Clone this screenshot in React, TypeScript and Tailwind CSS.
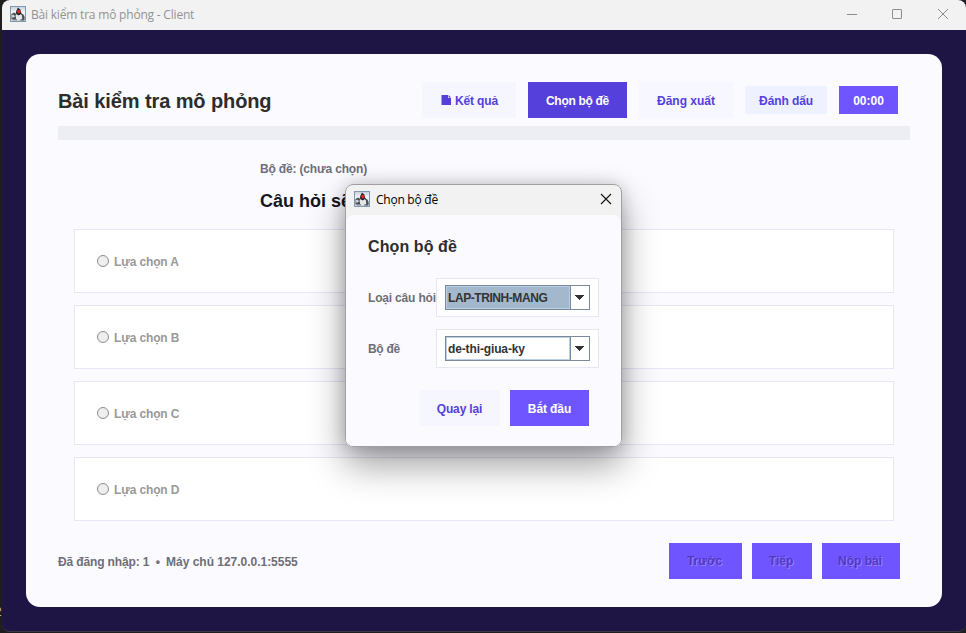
import React from "react";

const bold = "font-['Liberation_Sans',Arial,sans-serif] font-bold";

function DukeIcon() {
  return (
    <svg width="16" height="16" viewBox="0 0 16 16" className="shrink-0">
      <defs>
        <linearGradient id="duke-sky" x1="0" y1="0" x2="0" y2="1">
          <stop offset="0" stopColor="#c3d0db" />
          <stop offset="0.4" stopColor="#f4f7f9" />
          <stop offset="1" stopColor="#c4d0da" />
        </linearGradient>
      </defs>
      <rect x="0.5" y="0.5" width="15" height="15" fill="url(#duke-sky)" stroke="#7f9ab0" />
      <path d="M1.5 8 L4 6.6 L6.4 8 L6 13 L1.5 13.4 Z" fill="#4a4e54" />
      <path d="M1.6 9.6 L3.6 8.6 L5 10.6 L2.6 12 Z" fill="#d5d8da" />
      <path d="M10.6 7 L13.4 8.6 L14.6 11 L14.4 14.2 L11.4 14.2 Z" fill="#4a4e54" />
      <path d="M8 1.4 L10.2 3.4 L11.4 7.2 L10 9.6 L7.6 9.6 L5.8 7 L6.6 4.2 Z" fill="#25272c" />
      <path d="M5.4 9.4 L7 8.4 L8.6 9.8 L10.6 8.2 L12 9.6 L12.2 13 L10 14 L6.4 13.6 Z" fill="#e6e6e6" />
      <path d="M3 13.8 H7 M10 14 H14" stroke="#686c72" />
      <circle cx="8.9" cy="5.6" r="1.8" fill="#e0222b" />
    </svg>
  );
}

function Option({ label }: { label: string }) {
  return (
    <div className="flex h-16 items-center gap-[5px] border border-[#e6e6f5] bg-white pl-[22px]">
      <span className="size-3 rounded-full border border-[#8c8c8c] bg-[#eeeeee]" />
      <span className={`${bold} whitespace-nowrap pt-px text-xs tracking-[-0.15px] text-[#999999]`}>{label}</span>
    </div>
  );
}

function Combo({ value, selected }: { value: string; selected?: boolean }) {
  return (
    <div className="h-[39px] w-[163px] shrink-0 border border-[#e6e6f5] bg-white py-1.5 pl-2">
      <div className="flex h-[25px] w-[145px] border border-[#7a8a99]">
        <div
          className={`flex w-[124px] items-center border border-[#b8cfe5] pl-px text-xs text-[#333333] ${bold} ${
            selected ? "bg-[#a3b8cc] tracking-[-0.43px]" : "bg-white tracking-[-0.13px]"
          }`}
        >
          <span className="whitespace-nowrap">{value}</span>
        </div>
        <div className="flex flex-1 items-center justify-center border-l border-[#7a8a99] pr-0.5">
          <svg width="10" height="5" viewBox="0 0 10 5" shapeRendering="crispEdges">
            <path d="M0 0 H10 L5 5 Z" fill="#333333" />
          </svg>
        </div>
      </div>
    </div>
  );
}

function DisabledButton({ label, width }: { label: string; width: string }) {
  return (
    <button
      className={`${bold} ${width} h-9 whitespace-nowrap bg-[#6f55ff] pr-0.5 text-xs text-[#5339bf] [text-shadow:1px_1px_0_#9380ff]`}
    >
      {label}
    </button>
  );
}

function Dialog() {
  return (
    <section className="absolute left-[345px] top-[184px] flex h-[263px] w-[277px] flex-col overflow-hidden rounded-[8px] border border-[#a0a0a3] bg-[#f2f2f2]">
      <header className="flex h-[30px] shrink-0 items-center pl-2 pr-[9px]">
        <div className="pb-0.5">
          <DukeIcon />
        </div>
        <span className="ml-1.5 whitespace-nowrap font-['Open_Sans','Noto_Sans',sans-serif] text-xs tracking-[-0.25px] text-black">
          Chọn bộ đề
        </span>
        <svg className="mb-0.5 ml-auto" width="12" height="12" viewBox="0 0 12 12">
          <path d="M1 1 L11 11 M11 1 L1 11" stroke="#111111" strokeWidth="1.1" />
        </svg>
      </header>
      <div className="flex-1 rounded-t-[8px] bg-[#fbfaff] pl-[22px] pt-[21px]">
        <h2 className={`${bold} h-[21px] whitespace-nowrap text-base leading-[21px] tracking-[0.1px] text-[#2d2d2d]`}>
          Chọn bộ đề
        </h2>
        <div className={`${bold} mt-[21px] flex items-center text-xs text-[#6e6e78]`}>
          <span className="w-[68px] whitespace-nowrap tracking-[-0.18px]">Loại câu hỏi</span>
          <Combo value="LAP-TRINH-MANG" selected />
        </div>
        <div className={`${bold} mt-3 flex items-center text-xs text-[#6e6e78]`}>
          <span className="w-[68px] whitespace-nowrap tracking-[-0.3px]">Bộ đề</span>
          <Combo value="de-thi-giua-ky" />
        </div>
        <div className={`${bold} mt-[22px] flex gap-2.5 pl-[51px] text-xs`}>
          <button className="h-9 w-[81px] bg-[#f5f6ff] pt-0.5 tracking-[-0.15px] text-[#5540db]">Quay lại</button>
          <button className="h-9 w-[79px] bg-[#6f55ff] pt-0.5 tracking-[-0.1px] text-white">Bắt đầu</button>
        </div>
      </div>
    </section>
  );
}

export default function App() {
  return (
    <div className="relative h-[633px] w-[966px] overflow-hidden bg-[#1e1e20] pl-0.5">
      <main className="flex h-[632px] w-[964px] flex-col overflow-hidden rounded-[8px] border-b border-[#3b3a42] bg-[#1e1545]">
        <header className="flex h-[30px] shrink-0 items-center bg-[#f2f2f2] pl-2 pr-[17px]">
          <div className="pb-0.5">
            <DukeIcon />
          </div>
          <span className="ml-[5px] whitespace-nowrap font-['Open_Sans','Noto_Sans',sans-serif] text-xs tracking-[-0.2px] text-[#929292]">
            Bài kiểm tra mô phỏng - Client
          </span>
          <svg className="mb-0.5 ml-auto" width="102" height="12" viewBox="0 0 102 12" fill="none" stroke="#8c8c8c">
            <path d="M0 6.5 H10" />
            <rect x="45.5" y="1.5" width="9" height="9" rx="0.5" />
            <path d="M91 1 L101 11 M101 1 L91 11" />
          </svg>
        </header>
        <section className="ml-6 mt-6 flex h-[553px] w-[916px] flex-col rounded-[14px] bg-[#fbfaff] px-8 pt-7">
          <div className="flex h-9 items-center">
            <h1 className={`${bold} whitespace-nowrap pt-0.5 text-xl tracking-[-0.1px] text-[#2d2d2d]`}>
              Bài kiểm tra mô phỏng
            </h1>
            <div className={`${bold} ml-auto mr-3 flex items-center gap-3 whitespace-nowrap text-xs text-[#5540db]`}>
              <button className="flex h-9 w-[94px] items-center bg-[#f5f6ff] pl-[19px] tracking-[-0.15px]">
                <svg width="10" height="10" viewBox="0 0 10 10" className="mr-1">
                  <path d="M0.5 0 H7 V3 H10 V10 H0.5 Z M7.6 0 L10 2.4 H7.6 Z" fill="currentColor" />
                </svg>
                <span className="pt-0.5">Kết quả</span>
              </button>
              <button className="h-9 w-[99px] bg-[#5540db] pt-0.5 tracking-[-0.3px] text-white">Chọn bộ đề</button>
              <button className="h-9 w-[94px] bg-[#f7f7ff] pt-0.5">Đăng xuất</button>
              <button className="h-7 w-[82px] bg-[#eef1ff] pt-0.5 tracking-[-0.1px]">Đánh dấu</button>
              <div className="flex h-7 w-[59px] items-center justify-center bg-[#6f55ff] pt-0.5 text-white">00:00</div>
            </div>
          </div>
          <div className="mt-2 h-3.5 shrink-0 bg-[#edeef3]" />
          <div className="pl-[202px]">
            <p className={`${bold} mt-[21px] h-4 whitespace-nowrap text-xs leading-4 tracking-[-0.17px] text-[#6e6e78]`}>
              Bộ đề: (chưa chọn)
            </p>
            <h2 className={`${bold} mt-3 h-6 whitespace-nowrap text-lg leading-6 text-[#14141e]`}>Câu hỏi sẽ</h2>
          </div>
          <div className="mx-4 mt-4 flex flex-col gap-3">
            <Option label="Lựa chọn A" />
            <Option label="Lựa chọn B" />
            <Option label="Lựa chọn C" />
            <Option label="Lựa chọn D" />
          </div>
          <footer className="mt-[22px] flex h-9 items-center">
            <span className={`${bold} whitespace-pre pt-0.5 text-xs tracking-[-0.02px] text-[#6e6e78]`}>
              <span className="tracking-[-0.14px]">{"Đã đăng nhập: 1  •  "}</span>
              Máy chủ 127.0.0.1:5555
            </span>
            <div className="ml-auto mr-2.5 flex gap-2.5">
              <DisabledButton label="Trước" width="w-[73px]" />
              <DisabledButton label="Tiếp" width="w-[60px]" />
              <DisabledButton label="Nộp bài" width="w-[78px]" />
            </div>
          </footer>
        </section>
      </main>
      <div className="absolute left-[345px] top-[184px] h-[263px] w-[277px] rounded-[8px] shadow-[0_18px_36px_rgba(0,0,0,0.38),0_0_16px_rgba(0,0,0,0.18)]" />
      <Dialog />
      <span className="absolute -left-[5px] top-[606px] font-['Liberation_Sans',sans-serif] text-xs leading-3 text-[#b8b8b8]">2</span>
    </div>
  );
}
